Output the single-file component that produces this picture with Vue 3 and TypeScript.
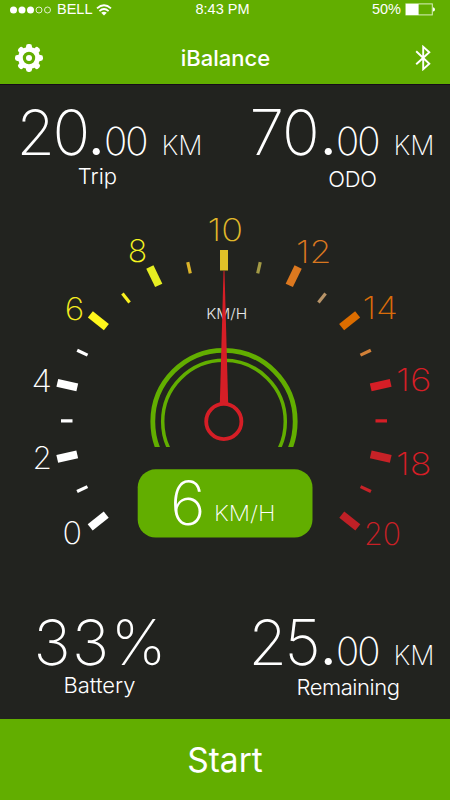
<script setup lang="ts">
interface Readout { id: string; whole: string; decimals?: string; unit?: string; label: string }
interface Tick { step: number; color: string }
interface Mark { text: string; x: number; y: number; width: number; color: string }

const top: Readout[] = [
  { id: 'trip', whole: '20', decimals: '00', unit: 'KM', label: 'Trip' },
  { id: 'odo', whole: '70', decimals: '00', unit: 'KM', label: 'ODO' },
]
const bottom: Readout[] = [
  { id: 'battery', whole: '33%', label: 'Battery' },
  { id: 'remaining', whole: '25', decimals: '00', unit: 'KM', label: 'Remaining' },
]

const colors = [
  '#ffffff', '#ffffff', '#ffffff', '#ffffff', '#ffffff', '#ffffff', '#fff71c',
  '#f9f01f', '#e6ee22', '#dcb42a', '#e0c028', '#a39a45', '#dc781f', '#b89468',
  '#dc6d00', '#d38138', '#d51e26', '#d51e26', '#c72227', '#c72227', '#bf2026',
]
const ticks: Tick[] = colors.map((color, step) => ({ step, color }))
const angle = (step: number): number => (step - 10) * 12.85

const marks: Mark[] = [
  { text: '0', x: 62.6, y: 544.2, width: 19.5, color: '#fff' },
  { text: '2', x: 32.4, y: 468.7, width: 19.5, color: '#fff' },
  { text: '4', x: 31.6, y: 391.7, width: 20.5, color: '#fff' },
  { text: '6', x: 64.8, y: 319.8, width: 19.5, color: '#f5ec20' },
  { text: '8', x: 127.8, y: 262, width: 19.5, color: '#f5f520' },
  { text: '10', x: 207.5, y: 240.5, width: 35.5, color: '#e0b82a' },
  { text: '12', x: 296, y: 263, width: 35.5, color: '#d9771f' },
  { text: '14', x: 362.5, y: 318.8, width: 35.5, color: '#d96c0a' },
  { text: '16', x: 396, y: 390.8, width: 35.5, color: '#d51e26' },
  { text: '18', x: 396, y: 475, width: 35.5, color: '#d51e26' },
  { text: '20', x: 364, y: 545, width: 37, color: '#c92026' },
]
</script>

<template>
  <div class="screen">
    <header class="header">
      <div class="status">
        <div class="carrier">
          <svg class="dots" width="42" height="8" viewBox="0 0 42 8">
            <circle v-for="n in 5" :key="n" :cx="n * 8.5 - 5" cy="4" :r="n < 4 ? 3.5 : 3" :fill="n < 4 ? '#fff' : 'none'" :stroke="n < 4 ? 'none' : '#fff'" stroke-width=".8" />
          </svg>
          <span class="bell">BELL</span>
          <svg class="wifi" width="16" height="12" viewBox="0 0 16 12" fill="none" stroke="#fff" stroke-width="1.8">
            <path d="M1 4.4Q8-2 15 4.4M3.4 7.1Q8 2.8 12.6 7.1" />
            <path d="M5.2 8.8Q8 6.5 10.8 8.8L8 11.6Z" fill="#fff" stroke="none" />
          </svg>
        </div>
        <span class="clock">8:43 PM</span>
        <div class="power">
          <span class="percent">50%</span>
          <svg width="31" height="13" viewBox="0 0 31 13">
            <rect x=".9" y=".9" width="26.4" height="11" fill="none" stroke="#d9efbd" stroke-width="1" />
            <rect x="1" y="1" width="12.6" height="11" fill="#fff" />
            <path d="M28 4.2Q30 4.5 30 6.4T28 8.6Z" fill="#fff" />
          </svg>
        </div>
      </div>
      <div class="nav">
        <svg class="gear" width="28" height="28" viewBox="-14 -14 28 28">
          <circle r="8.6" fill="none" stroke="#fff" stroke-width="4.8" />
          <g fill="#fff">
            <rect v-for="n in 8" :key="n" x="-3" y="-14" width="6" height="6" rx="2.4" :transform="`rotate(${n * 45})`" />
          </g>
          <circle r="3" fill="#fff" />
        </svg>
        <h1 class="title">iBalance</h1>
        <svg class="bluetooth" width="16" height="26" viewBox="0 0 16 26" fill="none" stroke="#fff" stroke-width="1.9">
          <path d="M1.2 6.3L14.3 18.8L8.2 24.2V1.8L14.3 7.2L1.2 19.2" />
        </svg>
      </div>
    </header>

    <main class="dashboard">
      <section class="readouts upper">
        <div v-for="r in top" :key="r.id" class="readout" :class="r.id">
          <div class="value">
            <span class="whole">{{ r.whole }}</span><i class="point">.</i><span class="decimals">{{ r.decimals }}</span><span class="unit">{{ r.unit }}</span>
          </div>
          <div class="label">{{ r.label }}</div>
        </div>
      </section>

      <svg class="gauge" width="450" height="360" viewBox="0 205 450 360">
        <defs>
          <clipPath id="arch"><rect x="140" y="340" width="170" height="107" /></clipPath>
        </defs>
        <g transform="translate(224 421)">
          <rect
            v-for="t in ticks"
            :key="t.step"
            :x="t.step % 2 ? -1.6 : -4"
            :y="t.step % 2 ? -163 : -171"
            :width="t.step % 2 ? 3.2 : 8"
            :height="t.step % 2 ? 11.5 : 20.5"
            :fill="t.color"
            :transform="`rotate(${angle(t.step)})`"
          />
        </g>
        <text v-for="m in marks" :key="m.text" class="mark" :x="m.x" :y="m.y" :textLength="m.width" lengthAdjust="spacingAndGlyphs" :fill="m.color">{{ m.text }}</text>
        <text class="caption" x="206.3" y="318.5" textLength="41" lengthAdjust="spacingAndGlyphs">KM/H</text>
        <g clip-path="url(#arch)" fill="none" stroke="#62ae00">
          <circle cx="224" cy="421.5" r="71.2" stroke-width="4.8" />
          <circle cx="224" cy="421.5" r="61.3" stroke-width="3.5" />
        </g>
        <path d="M223.5 271H224.5L228.2 404H219.8Z" fill="#d51e26" />
        <circle cx="223.8" cy="421.5" r="17.6" fill="none" stroke="#d51e26" stroke-width="3.8" />
        <rect x="137.7" y="469.3" width="174.8" height="68.2" rx="18" fill="#62ae00" />
        <text class="speed" x="170" y="525.3" textLength="35.5" lengthAdjust="spacingAndGlyphs">6</text>
        <text class="speed-unit" x="214" y="520.5" textLength="61.5" lengthAdjust="spacingAndGlyphs">KM/H</text>
      </svg>

      <section class="readouts lower">
        <div v-for="r in bottom" :key="r.id" class="readout" :class="r.id">
          <div class="value">
            <span class="whole">{{ r.whole }}</span>
            <template v-if="r.decimals"><i class="point">.</i><span class="decimals">{{ r.decimals }}</span><span class="unit">{{ r.unit }}</span></template>
          </div>
          <div class="label">{{ r.label }}</div>
        </div>
      </section>
    </main>

    <button class="start" type="button">Start</button>
  </div>
</template>

<style>
body { margin: 0; }
</style>

<style scoped>
.screen {
  width: 450px;
  height: 800px;
  display: flex;
  flex-direction: column;
  background: #22231f;
  color: #fff;
  font-family: Inter, "Liberation Sans", sans-serif;
  overflow: hidden;
}
.header { height: 84px; background: #62ae00; box-shadow: 0 1px 0 #160c18; flex: none; }
.status {
  height: 19px;
  display: grid;
  grid-template-columns: 1fr auto 1fr;
  align-items: center;
  font: 14px/19px "Liberation Sans", sans-serif;
  padding: 0 14px 0 10px;
}
.carrier, .power { display: flex; align-items: center; }
.bell { margin-left: 5px; font-size: 14.5px; }
.clock { font-size: 14.5px; margin-right: 1px; }
.wifi { margin-left: 3.5px; }
.power { justify-content: flex-end; gap: 4px; }
.percent { font-size: 14.5px; }
.nav { height: 65px; display: flex; align-items: center; justify-content: space-between; padding: 13px 19px 0 15px; box-sizing: border-box; }
.title { margin: 0 0 0 -7px; font-size: 22px; line-height: 28px; font-weight: 450; }
.dashboard { height: 635px; display: flex; flex-direction: column; flex: none; }
.readouts { display: grid; grid-template-columns: 232px 218px; }
.upper { height: 121px; }
.upper .value { margin-top: 16px; margin-bottom: 1px; }
.lower { height: 154px; }
.lower .value { margin-top: 45px; }
.readout { display: flex; flex-direction: column; }
.value { display: flex; align-items: baseline; height: 64px; line-height: 64px; padding-left: 16.5px; white-space: nowrap; }
.whole { width: 73px; font-size: 62.5px; font-weight: 200; letter-spacing: -2.5px; }
.odo .whole { letter-spacing: -1px; text-indent: 1px; }
.battery .whole { letter-spacing: 1.5px; text-indent: 17px; }
.point { width: 14.5px; font-size: 54px; font-style: normal; font-weight: 400; text-indent: -1px; }
.decimals { width: 57.5px; font-size: 38.5px; font-weight: 200; letter-spacing: -2px; }
.unit { font-size: 27px; font-weight: 200; }
.label { font-size: 22px; line-height: 22px; font-weight: 300; text-align: center; }
.trip .label { width: 195px; }
.odo .label { width: 241px; margin-top: 3px; letter-spacing: -.3px; }
.battery .label { width: 199px; }
.remaining .label { width: 232px; margin-top: 2px; letter-spacing: -.45px; }
.gauge { display: block; flex: none; }
.mark { font-size: 31px; font-weight: 200; }
.caption { font-size: 14px; font-weight: 300; fill: #e8e8e8; }
.speed { font-size: 61px; font-weight: 200; fill: #fff; }
.speed-unit { font-size: 21px; font-weight: 200; fill: #fff; }
.start {
  height: 81px;
  flex: none;
  border: 0;
  padding: 0;
  background: #62ae00;
  color: #fff;
  font: 380 33.5px/82px Inter, "Liberation Sans", sans-serif;
}
</style>
